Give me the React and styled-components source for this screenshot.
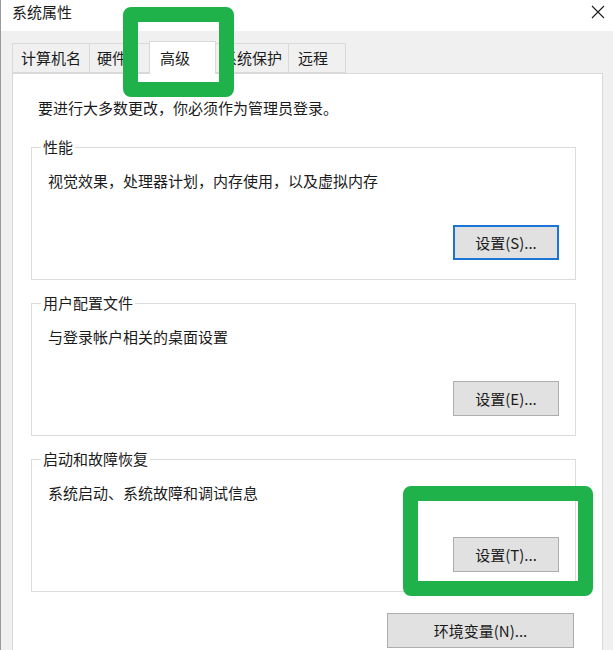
import React from 'react';
import styled, { createGlobalStyle } from 'styled-components';

const GlobalStyle = createGlobalStyle`
  html, body {
    margin: 0;
    padding: 0;
    background: #f0f0f0;
    overflow: hidden;
  }

  * {
    box-sizing: border-box;
  }
`;

const Window = styled.div`
  position: relative;
  width: 613px;
  height: 650px;
  overflow: hidden;
  border-left: 1px solid #9b9b9b;
  background: #f0f0f0;
  color: #1b1b1b;
  font-family: 'Noto Sans CJK SC', 'Microsoft YaHei', sans-serif;
  font-size: 15px;
  line-height: 20px;
`;

const TitleBar = styled.div`
  display: flex;
  align-items: center;
  justify-content: space-between;
  height: 31px;
  padding: 0 11px 8px 11px;
  background: #ffffff;
`;

const Title = styled.span`
  font-size: 15px;
`;

const CloseButton = styled.div`
  display: flex;
  align-items: center;
  justify-content: center;
  width: 16px;
  height: 16px;
  margin-right: -4px;
`;

const Body = styled.div`
  padding: 10px 10px 0 11px;
`;

const TabStrip = styled.div`
  display: flex;
  align-items: flex-end;
  height: 33px;
  margin-bottom: -1px;
  position: relative;
  z-index: 1;
`;

const Tab = styled.div`
  width: ${(props) => props.$width}px;
  height: ${(props) => (props.$active ? 33 : 30)}px;
  margin-left: ${(props) => (props.$first ? 0 : -1)}px;
  margin-bottom: ${(props) => (props.$active ? 0 : 1)}px;
  padding-left: ${(props) => props.$pad}px;
  border: 1px solid #d9d9d9;
  border-bottom: ${(props) => (props.$active ? 'none' : '1px solid #d9d9d9')};
  background: ${(props) => (props.$active ? '#ffffff' : '#f0f0f0')};
  display: flex;
  align-items: center;
  white-space: nowrap;
  position: relative;
  z-index: ${(props) => (props.$active ? 2 : 1)};
`;

const Panel = styled.div`
  border: 1px solid #d9d9d9;
  background: #ffffff;
  padding: 24px 26px 20px 18px;
  height: 600px;
`;

const Intro = styled.p`
  margin: 0 0 19px 0;
  padding-left: 7px;
`;

const Group = styled.fieldset`
  margin: 0 0 13px 0;
  padding: 0;
  border: 1px solid #dcdcdc;
  min-inline-size: 0;
`;

const GroupTitle = styled.legend`
  margin-left: 9px;
  padding: 0 2px;
  line-height: 20px;
`;

const GroupBody = styled.div`
  display: flex;
  flex-direction: column;
  padding: 14px 16px 19px 16px;
`;

const Description = styled.div`
  height: 20px;
`;

const ButtonRow = styled.div`
  display: flex;
  justify-content: flex-end;
  margin-top: ${(props) => props.$gap || 0}px;
  padding-right: ${(props) => props.$inset || 0}px;
`;

const Button = styled.button`
  width: ${(props) => props.$width || 106}px;
  height: 35px;
  padding: 0;
  border: ${(props) => (props.$focused ? '2px solid #1c74d4' : '1px solid #adadad')};
  background: #e1e1e1;
  color: #1b1b1b;
  font-family: inherit;
  font-size: 15px;
  line-height: 20px;
`;

const Highlight = styled.div`
  position: absolute;
  left: ${(props) => props.$x}px;
  top: ${(props) => props.$y}px;
  width: ${(props) => props.$w}px;
  height: ${(props) => props.$h}px;
  border: 15px solid #20b24a;
  border-radius: 8px;
  z-index: 5;
`;

const tabs = [
  { label: '计算机名', width: 78, pad: 8 },
  { label: '硬件', width: 61, pad: 7 },
  { label: '高级', width: 67, pad: 10, active: true },
  { label: '系统保护', width: 74, pad: 6 },
  { label: '远程', width: 58, pad: 9 },
];

const groups = [
  { title: '性能', text: '视觉效果，处理器计划，内存使用，以及虚拟内存', button: '设置(S)...', focused: true },
  { title: '用户配置文件', text: '与登录帐户相关的桌面设置', button: '设置(E)...' },
  { title: '启动和故障恢复', text: '系统启动、系统故障和调试信息', button: '设置(T)...' },
];

const CloseIcon = () => (
  <svg width="14" height="14" viewBox="0 0 14 14">
    <path d="M1 1 L13 13 M13 1 L1 13" stroke="#1b1b1b" strokeWidth="1.1" fill="none" />
  </svg>
);

export default function App() {
  return (
    <>
      <GlobalStyle />
      <Window>
        <TitleBar>
          <Title>系统属性</Title>
          <CloseButton>
            <CloseIcon />
          </CloseButton>
        </TitleBar>
        <Body>
          <TabStrip>
            {tabs.map((tab, i) => (
              <Tab key={tab.label} $width={tab.width} $pad={tab.pad} $active={tab.active} $first={i === 0}>
                {tab.label}
              </Tab>
            ))}
          </TabStrip>
          <Panel>
            <Intro>要进行大多数更改，你必须作为管理员登录。</Intro>
            {groups.map((group) => (
              <Group key={group.title}>
                <GroupTitle>{group.title}</GroupTitle>
                <GroupBody>
                  <Description>{group.text}</Description>
                  <ButtonRow $gap={34}>
                    <Button $focused={group.focused}>{group.button}</Button>
                  </ButtonRow>
                </GroupBody>
              </Group>
            ))}
            {/* the group's bottom margin collapses into this one */}
            <ButtonRow $gap={21} $inset={2}>
              <Button $width={187}>环境变量(N)...</Button>
            </ButtonRow>
          </Panel>
        </Body>
        <Highlight $x={122} $y={7} $w={111} $h={90} />
        <Highlight $x={402} $y={486} $w={190} $h={110} />
      </Window>
    </>
  );
}
